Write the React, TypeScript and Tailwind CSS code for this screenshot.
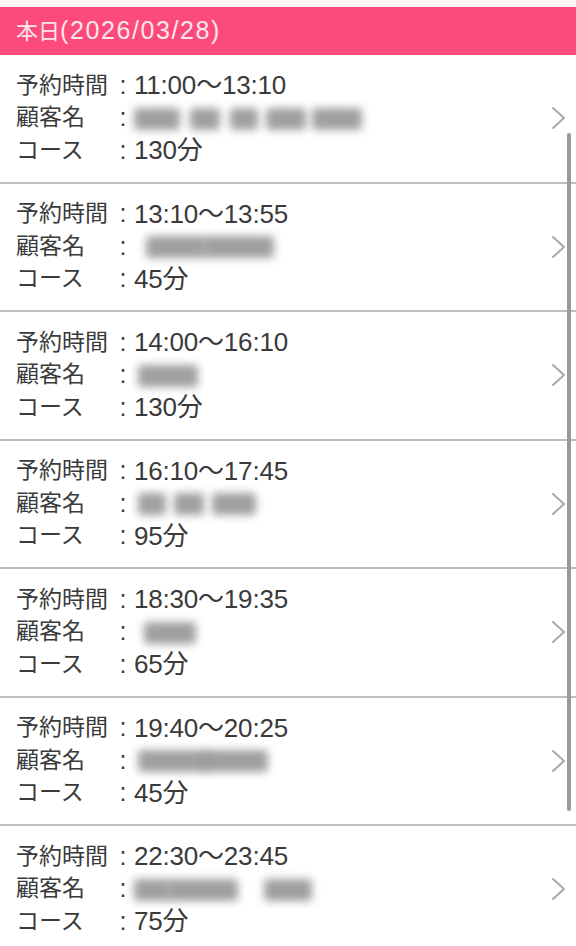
const reservations = [
  { time: '11:00〜13:10', course: '130分', blur: [[0, 46], [56, 30], [96, 28], [132, 40], [178, 50]] },
  { time: '13:10〜13:55', course: '45分', blur: [[12, 60], [70, 70]] },
  { time: '14:00〜16:10', course: '130分', blur: [[4, 60]] },
  { time: '16:10〜17:45', course: '95分', blur: [[4, 28], [40, 30], [78, 44]] },
  { time: '18:30〜19:35', course: '65分', blur: [[10, 52]] },
  { time: '19:40〜20:25', course: '45分', blur: [[4, 70], [70, 64]] },
  { time: '22:30〜23:45', course: '75分', blur: [[0, 36], [34, 70], [130, 48]] },
]

function Chevron() {
  return (
    <svg width="18" height="26" viewBox="0 0 18 26" fill="none">
      <path d="M4 3 L15 13 L4 23" stroke="#a8a8a8" strokeWidth="2" strokeLinecap="round" strokeLinejoin="round" />
    </svg>
  )
}

function BlurredName({ parts }: { parts: number[][] }) {
  return (
    <div className="relative h-[30px] w-[240px]">
      {parts.map(([left, width], i) => (
        <div
          key={i}
          className="absolute top-[5px] h-[22px] rounded-sm bg-[#777] opacity-70 blur-[4px]"
          style={{ left, width }}
        />
      ))}
    </div>
  )
}

function Row({ label, children }: { label: string; children: React.ReactNode }) {
  return (
    <div className="flex h-[32.5px] items-center">
      <span className="w-[96px] shrink-0 text-[23px]">{label}</span>
      <span className="w-[22px] shrink-0 text-center text-[25px]">:</span>
      <div className="flex items-center text-[26px] tracking-[-0.2px]">{children}</div>
    </div>
  )
}

export default function App() {
  return (
    <div
      className="relative h-[946px] w-[576px] overflow-hidden bg-white text-[#3a3a3a]"
      style={{ fontFamily: '"Liberation Sans", "Noto Sans CJK JP", sans-serif' }}
    >
      <div className="h-[7px] bg-[#fff5f7]" />
      <div className="flex h-[48px] items-center bg-[#fb4a7b] px-4 text-[#fde6ec]">
        <span className="text-[22px]">本日</span>
        <span className="text-[25px] tracking-[1.6px]">(2026/03/28)</span>
      </div>
      <div>
        {reservations.map((r, i) => (
          <div key={i} className="flex h-[128.5px] items-start border-b-2 border-[#bdbdbd] pl-4 pr-[9px] pt-[14px]">
            <div className="flex-1 leading-none">
              <Row label="予約時間">{r.time}</Row>
              <Row label="顧客名">
                <BlurredName parts={r.blur} />
              </Row>
              <Row label="コース">{r.course}</Row>
            </div>
            <div className="mt-[36px]">
              <Chevron />
            </div>
          </div>
        ))}
      </div>
      <div className="absolute left-[567px] top-[133px] h-[678px] w-[4px] rounded-full bg-[#9a9a9a]" />
    </div>
  )
}
